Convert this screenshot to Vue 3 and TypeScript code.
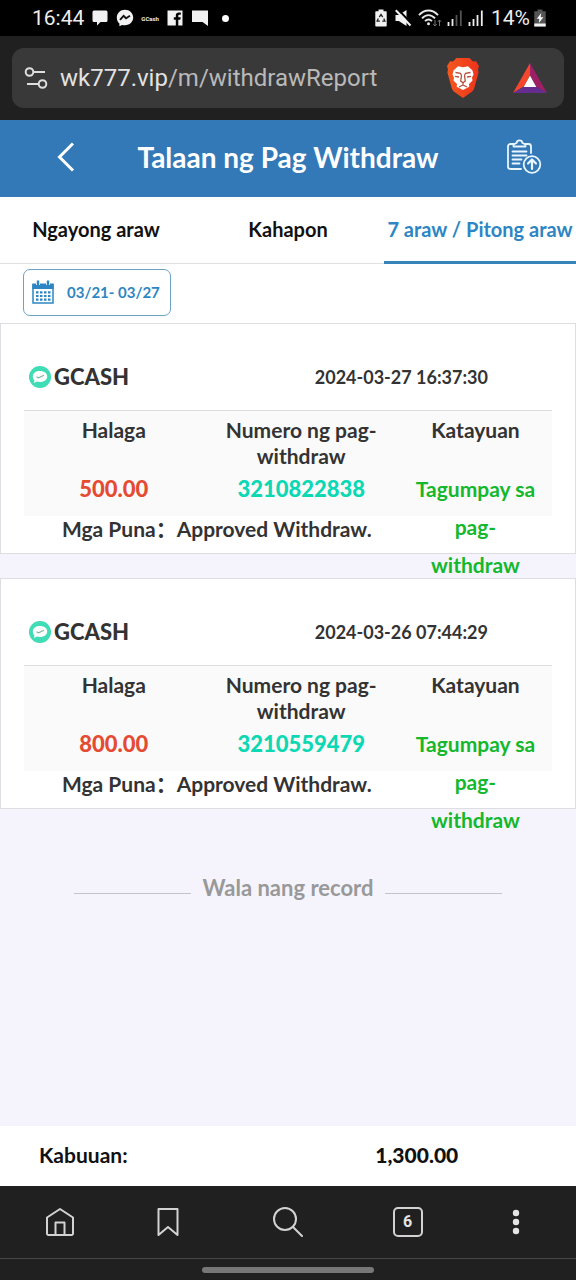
<script setup lang="ts">
import { ref } from 'vue'

interface WithdrawRecord {
  channel: string
  time: string
  amount: string
  reference: string
  status: string
  remark: string
}

const tabs: string[] = ['Ngayong araw', 'Kahapon', '7 araw / Pitong araw']
const activeTab = ref<number>(2)

const records: WithdrawRecord[] = [
  {
    channel: 'GCASH',
    time: '2024-03-27 16:37:30',
    amount: '500.00',
    reference: '3210822838',
    status: 'Tagumpay sa\npag-\nwithdraw',
    remark: 'Approved Withdraw.',
  },
  {
    channel: 'GCASH',
    time: '2024-03-26 07:44:29',
    amount: '800.00',
    reference: '3210559479',
    status: 'Tagumpay sa\npag-\nwithdraw',
    remark: 'Approved Withdraw.',
  },
]
</script>

<template>
  <div class="screen">
    <div class="status-bar">
      <div class="status-group">
        <span class="clock">16:44</span>
        <svg class="s-icon" viewBox="0 0 18 18" aria-hidden="true"><path d="M3 1.500h12a1.500 1.500 0 0 1 1.500 1.500v8.500a1.500 1.500 0 0 1-1.500 1.500H9.500L6 16.500V13H3a1.500 1.500 0 0 1-1.500-1.500V3A1.500 1.500 0 0 1 3 1.500z" fill="#f2f2f2" /></svg>
        <svg class="s-icon" viewBox="0 0 18 18" aria-hidden="true"><path d="M9 .8C4.300.8.8 4.200.8 8.700c0 2.400 1 4.400 2.600 5.800v2.700l2.700-1.300c.9.3 1.900.4 2.900.4 4.700 0 8.200-3.300 8.200-7.700S13.700.8 9 .8z" fill="#f2f2f2" /><path d="M4 10.800l3.600-3.900 2.400 2.300L14 6.800" fill="none" stroke="#111" stroke-width="1.900" /></svg>
        <span class="tiny">GCash</span>
        <svg class="s-icon" viewBox="0 0 18 18" aria-hidden="true"><path d="M1.500 1.500h15v15h-4.200v-5.800h2l.4-2.400h-2.400V6.900c0-.8.400-1.200 1.300-1.200h1.200V3.400h-1.900c-2 0-3.100 1.200-3.100 3.100v1.800h-2v2.400h2v5.800H1.500z" fill="#f2f2f2" /></svg>
        <svg class="s-icon" viewBox="0 0 18 18" aria-hidden="true"><path d="M1 1.500h16V17L11.500 13H1z" fill="#f2f2f2" /></svg>
        <span class="dot"></span>
      </div>
      <div class="status-group right">
        <svg class="batt" viewBox="0 0 12 18" aria-hidden="true"><path d="M3.500.5h5v1.700H11a.7.7 0 0 1 .7.7v13.900a.7.7 0 0 1-.7.7H1a.7.7 0 0 1-.7-.7V2.900a.7.7 0 0 1 .7-.7h2.500z" fill="#f2f2f2" /><path d="M4.300 8.200L6 5.500l1.700 2.700M8.800 9.500l1.100 2.700H7.300M4.900 12.200H2.100l1.200-2.700" fill="none" stroke="#222" stroke-width="1.300" /></svg>
        <svg class="s-icon mute" viewBox="0 0 18 18" aria-hidden="true"><path d="M1.500 6h3.300L12.500 1v16L4.800 12H1.500z" fill="#f2f2f2" /><path d="M4 .5L18 15" stroke="#000" stroke-width="2" /><path d="M1.800 1.200L16.500 16.500" stroke="#f2f2f2" stroke-width="2" /></svg>
        <svg class="wifi" viewBox="0 0 24 18" aria-hidden="true"><path d="M1 6.200C6.500 0 14.500 0 20 6.200M4 9.300c4-4.300 9-4.300 13 0M7 12.200c2.300-2.300 4.700-2.300 7 0" fill="none" stroke="#e8e8e8" stroke-width="1.900" /><circle cx="10.500" cy="14.800" r="1.500" fill="#e8e8e8" /><path d="M17 11v6M15.300 15.200L17 17l1.700-1.800M21.500 17v-6M19.800 12.800l1.700-1.800 1.700 1.800" fill="none" stroke="#777" stroke-width="1" /></svg>
        <svg class="signal" viewBox="0 0 16 18" aria-hidden="true"><path d="M1.500 17v-4M5.500 17v-7" stroke="#eee" stroke-width="1.800" /><path d="M9.500 17V6M13.800 17V1.500" stroke="#555" stroke-width="1.800" /></svg>
        <svg class="signal" viewBox="0 0 16 18" aria-hidden="true"><path d="M1.500 17v-4M5.500 17v-7M9.500 17V6M13.800 17V1.500" stroke="#eee" stroke-width="1.800" /></svg>
        <span class="clock percent">14%</span>
        <svg class="batt" viewBox="0 0 12 18" aria-hidden="true"><path d="M3.500.5h5v1.700h3.200v15.300H.3V2.200h3.200z" fill="#555" /><path d="M.3 14.500h11.400v3H.3z" fill="#f2f2f2" /><path d="M7.300 4L2.800 9.700h2.600L4.800 14l4.600-5.800H6.600z" fill="#fff" /></svg>
      </div>
    </div>

    <div class="browser-bar">
      <div class="address">
        <button class="url" type="button" aria-label="Address bar">
          <svg class="tune" viewBox="0 0 24 24" aria-hidden="true"><g fill="none" stroke="#dedede" stroke-width="2"><circle cx="5.500" cy="6" r="3.800" /><path d="M9.500 6H21M3 18h11" /><circle cx="18.500" cy="18" r="3.800" /></g></svg>
          <span class="url-text"><span class="host">wk777.vip</span>/m/withdrawReport</span>
        </button>
        <button class="shield" type="button" aria-label="Brave Shields">
          <svg viewBox="0 0 34 40" aria-hidden="true">
            <defs><linearGradient id="lion" x1="0" x2="1"><stop offset="0" stop-color="#f4581f" /><stop offset="1" stop-color="#ee331c" /></linearGradient></defs>
            <path d="M10.500 0h13l3.500 3.500 3-.2 3 4.700-1 3.500.6 3-4.300 15.500c-.5 1.700-1.500 3-2.800 4L17 40l-8.500-6c-1.300-1-2.300-2.300-2.800-4L1.400 14.500l.6-3-1-3.500 3-4.700 3 .2z" fill="url(#lion)" />
            <path d="M12 8.300l5 1 5-1 4.500 4.200 1 4-1.500 3 .5 3-3.500 3.500.3 2.800L17 32l-6.300-3.200.3-2.800-3.500-3.500.5-3-1.500-3 1-4z" fill="#fff" />
            <path d="M9.500 14.500l5 .8 1 2.200-.8 5.500 2.300 1.800 2.300-1.800-.8-5.500 1-2.200 5-.8M9 18.300l4 .7M25 18.300l-4 .7M17 24.800v2.500M13 29l4-2 4 2" fill="none" stroke="#b5503c" stroke-width="1.300" />
          </svg>
        </button>
        <button class="rewards" type="button" aria-label="Brave Rewards">
          <svg viewBox="0 0 34 30" aria-hidden="true">
            <path d="M17 0L0 30l11-6.500L17 12z" fill="#f5472c" />
            <path d="M17 0l17 30-11-6.500L17 12z" fill="#9e1f63" />
            <path d="M0 30h34l-11-6.500H11z" fill="#662d91" />
            <path d="M17 12.500l6.300 11.500H10.700z" fill="#fff" />
          </svg>
        </button>
      </div>
    </div>

    <header class="page-head">
      <button class="back" type="button" aria-label="Back">
        <svg viewBox="0 0 18 30" aria-hidden="true"><path d="M16 1.500L2.500 15 16 28.500" fill="none" stroke="#fff" stroke-width="3" /></svg>
      </button>
      <h1>Talaan ng Pag Withdraw</h1>
      <button class="report" type="button" aria-label="Report">
        <svg viewBox="0 0 36 36" aria-hidden="true">
          <g fill="none" stroke="#e9f6ff" stroke-width="1.800" stroke-linejoin="round" stroke-linecap="round">
            <path d="M8 5H4.500A2.500 2.500 0 0 0 2 7.500v20A2.500 2.500 0 0 0 4.500 30H15M19 5h3.500A2.500 2.500 0 0 1 25 7.500V14" />
            <path d="M7.500 7.500V5.500l3-1.500c.5-3.500 5.500-3.500 6 0l3 1.500v2z" />
            <path d="M6.500 12.500h14M6.500 16.500h14M6.500 20.500h9M6.500 24.500h7" />
            <circle cx="26" cy="25.500" r="8.300" /><path d="M26 30v-9M22 24.500l4-4 4 4" stroke-width="2.200" />
          </g>
        </svg>
      </button>
    </header>

    <div class="tabs" role="tablist">
      <button
        v-for="(tab, i) in tabs"
        :key="tab"
        type="button"
        role="tab"
        :aria-selected="activeTab === i"
        :class="['tab', { active: activeTab === i }]"
        @click="activeTab = i"
      >{{ tab }}</button>
    </div>

    <div class="filter">
      <button class="range" type="button">
        <svg class="cal" viewBox="0 0 22 24" aria-hidden="true">
          <path d="M1 5h20v18H1z" fill="#fff" stroke="#2d86c3" stroke-width="1.500" />
          <path d="M.3 3.500h21.400V9H.3z" fill="#2d86c3" />
          <path d="M6 1v4M16 1v4" stroke="#fff" stroke-width="4" /><path d="M6 .5v5M16 .5v5" stroke="#2d86c3" stroke-width="2.400" />
          <path d="M4 12.300h14.500M4 16h14.500M4 19.700h14.500" stroke="#2d86c3" stroke-width="2.200" stroke-dasharray="2.500 1.500" />
        </svg>
        <span>03/21- 03/27</span>
      </button>
    </div>

    <main class="list">
      <article v-for="record in records" :key="record.reference" class="card">
        <div class="card-head">
          <div class="channel">
            <svg viewBox="0 0 22 22" aria-hidden="true"><circle cx="11" cy="11" r="11" fill="#3fdcb5" /><path d="M3.800 10.500C3.800 7 7 5 11 5s7.200 2.200 7.200 5.500S15 16 11 16c-1 0-2-.1-3-.4L4.800 17l.6-2.800c-1-1-1.600-2.200-1.600-3.700z" fill="#fff" /><path d="M7.500 10.800l2 1L15 9.300" fill="none" stroke="#7fb3a6" stroke-width="1.100" /></svg>
            <h2>{{ record.channel }}</h2>
          </div>
          <time>{{ record.time }}</time>
        </div>
        <table>
          <thead>
            <tr>
              <th class="c-amount" scope="col">Halaga</th>
              <th class="c-number" scope="col">Numero ng pag-<br />withdraw</th>
              <th class="c-status" scope="col">Katayuan</th>
            </tr>
          </thead>
          <tbody>
            <tr>
              <td class="amount">{{ record.amount }}</td>
              <td class="number">{{ record.reference }}</td>
              <td><div class="state">{{ record.status }}</div></td>
            </tr>
          </tbody>
        </table>
        <p class="remark"><span>Mga Puna：</span>{{ record.remark }}</p>
      </article>
      <p class="end">Wala nang record</p>
    </main>

    <footer class="total">
      <span>Kabuuan:</span>
      <strong>1,300.00</strong>
    </footer>

    <nav class="bottom-nav" aria-label="Browser">
      <button type="button" aria-label="Home">
        <svg viewBox="0 0 30 30" aria-hidden="true"><g fill="none" stroke="#d2d2d2" stroke-width="2" stroke-linejoin="round"><path d="M2 10.500L15 2l13 8.500V26.500a1.500 1.500 0 0 1-1.500 1.500h-23A1.500 1.500 0 0 1 2 26.500z" /><path d="M10.500 28V15.500h9V28" /></g></svg>
      </button>
      <button type="button" aria-label="Bookmarks">
        <svg viewBox="0 0 30 30" aria-hidden="true"><path d="M5.500 2h19v26L15 20l-9.500 8z" fill="none" stroke="#d2d2d2" stroke-width="2" stroke-linejoin="round" /></svg>
      </button>
      <button type="button" aria-label="Search">
        <svg viewBox="0 0 30 30" aria-hidden="true"><g fill="none" stroke="#d2d2d2" stroke-width="2" stroke-linecap="round"><circle cx="12" cy="12" r="11" /><path d="M20 20l9 9" /></g></svg>
      </button>
      <button type="button" aria-label="Tabs"><span class="count">6</span></button>
      <button type="button" aria-label="Menu">
        <svg viewBox="0 0 30 30" aria-hidden="true"><g fill="#e4e4e4"><circle cx="15" cy="6" r="3.200" /><circle cx="15" cy="15" r="3.200" /><circle cx="15" cy="24" r="3.200" /></g></svg>
      </button>
    </nav>
    <div class="gesture"><span></span></div>
  </div>
</template>

<style>
body {
  background: #f5f4fd;
}
</style>

<style scoped>
.screen {
  min-height: 100vh;
  display: flex;
  flex-direction: column;
  background: #f5f4fd;
  color: #333;
  font-family: Lato, "Noto Sans CJK SC", sans-serif;
}
.screen * {
  box-sizing: border-box;
}
svg {
  display: block;
  flex: none;
}
button {
  margin: 0;
  padding: 0;
  border: 0;
  background: none;
  color: inherit;
  font: inherit;
  cursor: pointer;
}
h1, h2, p {
  margin: 0;
}

.status-bar {
  display: flex;
  justify-content: space-between;
  align-items: center;
  height: 36px;
  padding: 0 30px 0 32px;
  background: #000;
  color: #ededed;
  font-family: Roboto, sans-serif;
}
.status-group {
  display: flex;
  align-items: center;
  gap: 7px;
}
.status-group.right {
  gap: 4px;
}
.clock {
  font-size: 21px;
  line-height: 36px;
}
.percent {
  margin-left: 3px;
}
.s-icon {
  width: 18px;
  height: 18px;
}
.wifi {
  width: 24px;
  height: 18px;
}
.signal {
  width: 16px;
  height: 18px;
  margin-left: 1px;
}
.batt {
  width: 12px;
  height: 18px;
}
.mute {
  margin: 0 2px 0 3px;
}
.tiny {
  font-size: 6px;
  font-weight: 700;
}
.dot {
  width: 7px;
  height: 7px;
  margin-left: 6px;
  border-radius: 50%;
  background: #fff;
}

.browser-bar {
  padding: 12px;
  background: #202020;
}
.address {
  display: flex;
  align-items: center;
  height: 60px;
  padding: 0 17px 0 12px;
  border-radius: 12px;
  background: #393939;
}
.url {
  flex: 1;
  display: flex;
  align-items: center;
  gap: 12px;
  color: #b9b9b9;
  font-family: Roboto, sans-serif;
  font-size: 24px;
}
.host {
  color: #e2e2e2;
}
.tune {
  width: 24px;
  height: 24px;
}
.shield svg {
  width: 34px;
  height: 40px;
}
.rewards {
  margin-left: 33px;
}
.rewards svg {
  width: 34px;
  height: 30px;
}

.page-head {
  display: grid;
  grid-template-columns: 84px 1fr 84px;
  align-items: center;
  height: 77px;
  padding: 0 24px 4px;
  background: #3379b7;
  color: #fff;
}
.back,
.report {
  display: flex;
  justify-content: center;
}
.back svg {
  width: 18px;
  height: 30px;
}
.report {
  justify-content: flex-end;
  padding-right: 10px;
}
.report svg {
  width: 36px;
  height: 36px;
}
h1 {
  font-size: 28px;
  font-weight: 700;
  line-height: 36px;
  text-align: center;
  white-space: nowrap;
}

.tabs {
  display: grid;
  grid-template-columns: repeat(3, 1fr);
  height: 67px;
  border-bottom: 1px solid #e0e0e0;
  background: #fff;
}
.tab {
  height: 67px;
  border-bottom: 3px solid transparent;
  color: #111;
  font-size: 20px;
  font-weight: 700;
  white-space: nowrap;
}
.tab.active {
  border-bottom-color: #3585ba;
  color: #2d86c3;
}

.filter {
  padding: 5px 23px 7px;
  background: #fff;
}
.range {
  display: flex;
  align-items: center;
  gap: 13px;
  height: 47px;
  padding: 0 10px 1px 8px;
  border: 1px solid #6ba3c4;
  border-radius: 7px;
  color: #2d86c3;
  font-size: 15px;
  font-weight: 700;
}
.cal {
  width: 22px;
  height: 24px;
}

.list {
  flex: 1;
}
.card {
  margin-bottom: 24px;
  padding: 0 23px;
  border: 1px solid #dedee2;
  background: #fff;
}
.card-head {
  display: flex;
  align-items: center;
  justify-content: space-between;
  height: 87px;
  padding: 20px 64px 0 5px;
  border-bottom: 1px solid #dedede;
}
.channel {
  display: flex;
  align-items: center;
  gap: 3px;
}
.channel svg {
  width: 22px;
  height: 22px;
}
h2 {
  font-size: 22px;
  font-weight: 900;
  line-height: 26px;
}
time {
  font-size: 18px;
  font-weight: 700;
}
table {
  width: 100%;
  table-layout: fixed;
  border-collapse: collapse;
  background: #fafafa;
  text-align: center;
}
th {
  height: 59px;
  padding: 6px 0 0;
  font-size: 21px;
  font-weight: 700;
  line-height: 26px;
  vertical-align: top;
}
.c-amount {
  width: 34%;
}
.c-number {
  width: 37%;
}
.c-status {
  width: 29%;
}
td {
  height: 46px;
  padding: 0;
  font-size: 22px;
  line-height: 38px;
  vertical-align: top;
}
.amount {
  color: #e54b33;
  font-weight: 900;
}
.number {
  color: #0cd8b4;
  font-weight: 900;
}
.state {
  height: 38px;
  color: #14b82c;
  font-size: 21px;
  font-weight: 700;
  white-space: pre-line;
}
.remark {
  padding: 0 0 11px 38px;
  font-size: 21px;
  font-weight: 700;
  line-height: 26px;
}
.end {
  display: flex;
  align-items: center;
  gap: 12px;
  padding: 41px 74px 0;
  color: #999;
  font-size: 22px;
  font-weight: 700;
  line-height: 28px;
}
.end::before,
.end::after {
  content: "";
  flex: 1;
  height: 1px;
  margin-top: 10px;
  background: #c4c4c8;
}

.total {
  display: grid;
  grid-template-columns: 1fr 1fr;
  align-items: center;
  height: 60px;
  padding: 0 0 4px 39px;
  background: #fff;
  color: #111;
  font-size: 21px;
  font-weight: 700;
}
.total strong {
  padding-right: 50px;
  text-align: center;
}

.bottom-nav {
  display: grid;
  grid-template-columns: 120fr 95fr 145fr 95fr 121fr;
  height: 72px;
  background: #202020;
}
.bottom-nav button {
  display: flex;
  align-items: center;
  justify-content: center;
}
.bottom-nav svg {
  width: 30px;
  height: 30px;
}
.count {
  width: 30px;
  height: 30px;
  border: 2px solid #d2d2d2;
  border-radius: 5px;
  color: #e4e4e4;
  font-family: Roboto, sans-serif;
  font-size: 16px;
  font-weight: 700;
  line-height: 26px;
  text-align: center;
}
.gesture {
  display: flex;
  align-items: center;
  justify-content: center;
  height: 22px;
  border-top: 1px solid #484848;
  background: #202020;
}
.gesture span {
  width: 30%;
  height: 6px;
  border-radius: 3px;
  background: #777;
}
</style>
